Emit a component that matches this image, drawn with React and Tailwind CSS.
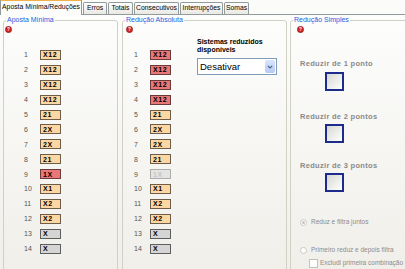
import React from 'react';

const grupo1 = [
  ['X12', 'p'], ['X12', 'p'], ['X12', 'p'], ['X12', 'p'], ['21', 'p'], ['2X', 'p'], ['2X', 'p'],
  ['21', 'p'], ['1X', 'r'], ['X1', 'p'], ['X2', 'p'], ['X2', 'p'], ['X', 'g'], ['X', 'g'],
];

const grupo2 = [
  ['X12', 'r'], ['X12', 'r'], ['X12', 'r'], ['X12', 'r'], ['21', 'p'], ['2X', 'p'], ['2X', 'p'],
  ['21', 'p'], ['1X', 'd'], ['X1', 'p'], ['X2', 'p'], ['X2', 'p'], ['X', 'g'], ['X', 'g'],
];

const boxColors = {
  p: 'bg-[#fdd7a3] border-[#6e5d48] text-black',
  r: 'bg-[#e97777] border-[#6b3a3a] text-black',
  g: 'bg-[#d5d5d5] border-[#5e5e5e] text-black',
  d: 'bg-[#e4e4e4] border-[#adadad] text-[#c4c4c4]',
};

const tabs = [
  ['Erros', 'w-[24px]'],
  ['Totais', 'w-[25px]'],
  ['Consecutivos', 'w-[45px]'],
  ['Interrupções', 'w-[43px]'],
  ['Somas', 'w-[25px]'],
];

const HelpIcon = () => (
  <svg width="7" height="7" viewBox="0 0 8 8" className="block">
    <circle cx="4" cy="4" r="3.6" fill="#d42222" stroke="#7c1010" strokeWidth="0.6" />
    <text x="4" y="6.1" fontSize="5.5" fontWeight="bold" fill="#fff" textAnchor="middle" fontFamily="Liberation Sans, sans-serif">
      ?
    </text>
  </svg>
);

const Row = ({ n, label, kind }) => (
  <div className="flex items-center h-[14.9px]">
    <span className="w-[16px] text-[7px] leading-none text-[#555]">{n}</span>
    <span
      className={`w-[21px] h-[10px] border flex items-center pl-[2px] text-[7px] font-bold tracking-[0.6px] leading-none ${boxColors[kind]}`}
    >
      {label}
    </span>
  </div>
);

const Rows = ({ data }) => (
  <div className="flex flex-col">
    {data.map(([label, kind], i) => (
      <Row key={i} n={i + 1} label={label} kind={kind} />
    ))}
  </div>
);

const BigCheck = () => (
  <div className="ml-[25px] w-[19px] h-[19px] border-2 border-[#1c2b8c] bg-linear-to-br from-[#d8d8d2] to-white" />
);

const GroupBox = ({ title, className, children }) => (
  <fieldset className={`mt-[1px] h-[262px] shrink-0 border border-[#d0d0c4] rounded-[3px] ${className}`}>
    <legend className="ml-[2px] px-[1px] text-[7px] leading-[8px] whitespace-nowrap text-[#1f5ce0]">{title}</legend>
    {children}
  </fieldset>
);

export default function App() {
  return (
    <div
      className="w-[405px] h-[269px] overflow-hidden bg-white whitespace-nowrap"
      style={{ fontFamily: '"Liberation Sans", Tahoma, sans-serif' }}
    >
      {/* abas */}
      <div className="flex items-end h-[15px] border-b border-[#919b9c] bg-[#fbfbfa]">
        <div className="relative z-10 -mb-px h-[16px] w-[82px] border-x border-t-2 border-[#919b9c] border-t-[#f0b04a] bg-[#fcfcfb] flex items-start justify-center pt-[2px] text-[6.8px] leading-[8px] text-black">
          Aposta Mínima/Reduções
        </div>
        {tabs.map(([name, w]) => (
          <div
            key={name}
            className={`${w} ml-[1px] h-[12px] border-x border-t border-[#919b9c] rounded-t-[2px] bg-linear-to-b from-white to-[#e9e8e2] flex items-center justify-center text-[6.8px] leading-none text-black`}
          >
            {name}
          </div>
        ))}
      </div>

      {/* painel */}
      <div className="flex h-[254px] bg-linear-to-b from-[#fdfdfc] to-[#f0efea]">
        <GroupBox title="Aposta Mínima" className="ml-[3px] w-[115px]">
          <div className="pl-[1px] pt-[2px]">
            <HelpIcon />
          </div>
          <div className="mt-[14.5px] pl-[20px]">
            <Rows data={grupo1} />
          </div>
        </GroupBox>

        <GroupBox title="Redução Absoluta" className="ml-[4px] w-[165px]">
          <div className="flex">
            <div className="w-[74px] shrink-0">
              <div className="pl-[3px] pt-[2px]">
                <HelpIcon />
              </div>
              <div className="mt-[14.5px] pl-[11px]">
                <Rows data={grupo2} />
              </div>
            </div>
            <div className="pt-[14px]">
              <div className="text-[7px] leading-[8px] font-bold text-black">
                Sistemas reduzidos
                <br />
                disponíveis
              </div>
              <div className="mt-[4px] w-[80px] h-[17px] border border-[#7f9db9] bg-white flex items-stretch">
                <span className="flex-1 pl-[2px] flex items-center text-[9.5px] leading-none text-black">Desativar</span>
                <span className="m-[1px] w-[10px] rounded-[2px] bg-linear-to-b from-[#dbe6fd] to-[#b5c9f5] flex items-center justify-center">
                  <svg width="6" height="4" viewBox="0 0 6 4">
                    <path d="M0.8 0.8 L3 3 L5.2 0.8" fill="none" stroke="#4d6185" strokeWidth="1.2" />
                  </svg>
                </span>
              </div>
            </div>
          </div>
        </GroupBox>

        <GroupBox title="Redução Simples" className="ml-[3px] w-[125px]">
          <div className="pl-[6px] pt-[2px]">
            <HelpIcon />
          </div>
          <div className="pl-[9px]">
            <div className="mt-[27px] text-[7.5px] leading-[8px] font-bold tracking-[0.3px] text-[#8a8a8a]">Reduzir de 1 ponto</div>
            <div className="mt-[4px]">
              <BigCheck />
            </div>
            <div className="mt-[22px] text-[7.5px] leading-[8px] font-bold tracking-[0.3px] text-[#8a8a8a]">Reduzir de 2 pontos</div>
            <div className="mt-[3px]">
              <BigCheck />
            </div>
            <div className="mt-[19px] text-[7.5px] leading-[8px] font-bold tracking-[0.3px] text-[#8a8a8a]">Reduzir de 3 pontos</div>
            <div className="mt-[3px]">
              <BigCheck />
            </div>

            <div className="mt-[26px] flex items-center h-[8px]">
              <span className="w-[7px] h-[7px] rounded-full border border-[#c9c9c1] bg-white flex items-center justify-center">
                <span className="w-[3px] h-[3px] rounded-full bg-[#c4c4bd]" />
              </span>
              <span className="ml-[4px] text-[6.5px] leading-none text-[#8c8c8c]">Reduz e filtra juntos</span>
            </div>
            <div className="mt-[20px] flex items-center h-[8px]">
              <span className="w-[7px] h-[7px] rounded-full border border-[#c9c9c1] bg-white" />
              <span className="ml-[4px] text-[6.5px] leading-none text-[#8c8c8c]">Primeiro reduz e depois filtra</span>
            </div>
            <div className="mt-[5px] ml-[9px] flex items-center h-[9px]">
              <span className="w-[9px] h-[9px] border border-[#c2c2ba] bg-white" />
              <span className="ml-[2px] text-[6.5px] leading-none text-[#8c8c8c]">Excludi primeira combinação</span>
            </div>
          </div>
        </GroupBox>
      </div>
    </div>
  );
}
